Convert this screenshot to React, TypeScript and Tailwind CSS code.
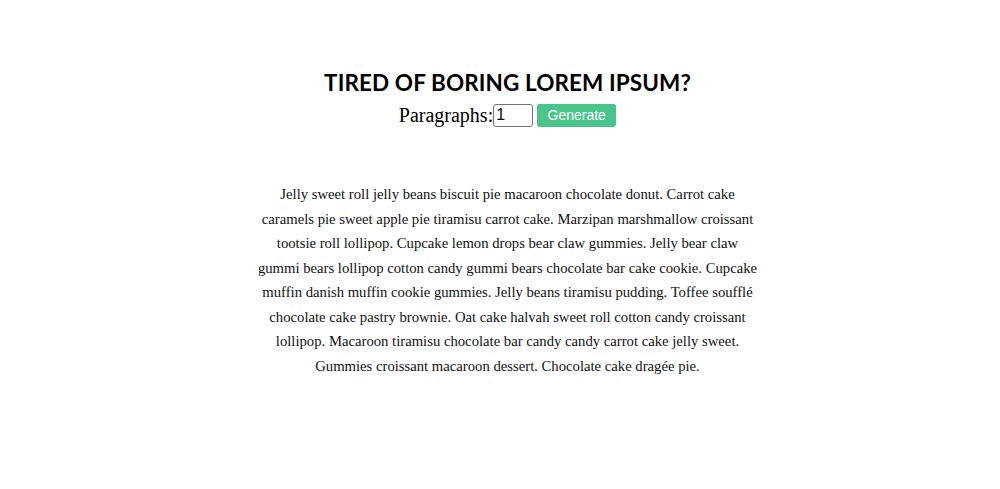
const lines = [
  "Jelly sweet roll jelly beans biscuit pie macaroon chocolate donut. Carrot cake",
  "caramels pie sweet apple pie tiramisu carrot cake. Marzipan marshmallow croissant",
  "tootsie roll lollipop. Cupcake lemon drops bear claw gummies. Jelly bear claw",
  "gummi bears lollipop cotton candy gummi bears chocolate bar cake cookie. Cupcake",
  "muffin danish muffin cookie gummies. Jelly beans tiramisu pudding. Toffee soufflé",
  "chocolate cake pastry brownie. Oat cake halvah sweet roll cotton candy croissant",
  "lollipop. Macaroon tiramisu chocolate bar candy candy carrot cake jelly sweet.",
  "Gummies croissant macaroon dessert. Chocolate cake dragée pie.",
];

export default function App() {
  return (
    <div className="min-h-screen bg-white pl-[15px] pt-[64px]">
      <div className="flex flex-col items-center">
        <h1 className="font-['Lato',sans-serif] text-[22.5px] font-bold leading-[38px] tracking-[0.1px] text-black">
          TIRED OF BORING LOREM IPSUM?
        </h1>
        <form className="flex items-center font-['Liberation_Serif',serif] text-[20px] leading-[26px] text-black" onSubmit={(e) => e.preventDefault()}>
          <label htmlFor="count">Paragraphs:</label>
          <input
            id="count"
            type="number"
            defaultValue={1}
            className="h-[23px] w-[40px] rounded-[3px] border border-[#767676] px-[2px] font-['Liberation_Sans',sans-serif] text-[16px] leading-[20px] text-black"
          />
          <button
            type="submit"
            className="ml-[4px] h-[23px] w-[79px] rounded-[3px] bg-[#49c58c] font-['Liberation_Sans',sans-serif] text-[14px] leading-[20px] text-white"
          >
            Generate
          </button>
        </form>
        <article className="mt-[54px] w-[540px] text-center font-['Liberation_Serif',serif] text-[14.7px] leading-[24.5px] text-[#111]">
          <p>
            {lines.map((line, i) => (
              <span key={i}>
                {line}
                {i < lines.length - 1 && <br />}
              </span>
            ))}
          </p>
        </article>
      </div>
    </div>
  );
}
